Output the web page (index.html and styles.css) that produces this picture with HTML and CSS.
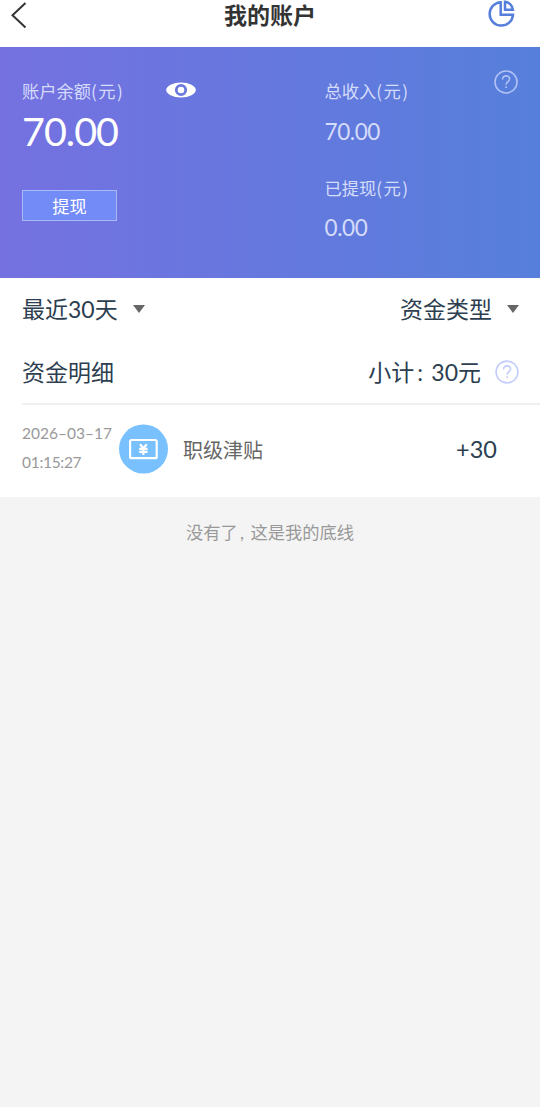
FILE: index.html
```html
<!DOCTYPE html>
<html lang="zh-CN">
<head>
<meta charset="utf-8">
<title>我的账户</title>
<link rel="stylesheet" href="styles.css">
</head>
<body>
<header class="navbar">
  <svg class="back" width="18" height="30" viewBox="0 0 18 30"><path d="M15.500 3 2.500 15.300 15.500 27.500" fill="none" stroke="#333" stroke-width="2"/></svg>
  <h1 class="title">我的账户</h1>
  <svg class="chart" width="28" height="28" viewBox="0 0 28 28" fill="none" stroke="#567fdc" stroke-width="2.500"><path d="M13.700 2.200A11.700 11.700 0 1 0 26 14.800H13.700Z"/><path d="M18 1.800V9.800H25.900A8.800 8.800 0 0 0 18 1.800Z"/></svg>
</header>
<section class="hero">
  <div class="balance">
    <div class="label-row"><span class="label">账户余额<span class="unit">(元)</span></span>
      <svg class="eye" width="30" height="16" viewBox="0 0 30 16"><ellipse cx="15" cy="8" rx="14.800" ry="7.400" fill="#fff"/><circle cx="15" cy="8" r="4.700" fill="none" stroke="#6b78de" stroke-width="2.800"/></svg>
    </div>
    <div class="amount">70.00</div>
    <button class="withdraw">提现</button>
  </div>
  <div class="stats">
    <div class="label">总收入<span class="unit">(元)</span></div>
    <div class="value">70.00</div>
    <div class="label">已提现<span class="unit">(元)</span></div>
    <div class="value">0.00</div>
  </div>
  <svg class="help" width="24" height="24" viewBox="0 0 24 24" fill="none" stroke="#b0c2f5" stroke-width="1.600"><circle cx="12" cy="12" r="11"/><path d="M8.600 9.400C8.600 4.700 15.600 4.700 15.600 9.100C15.600 11.600 12.100 11.700 12.100 14.700"/><path d="M12.100 16.300v1.800"/></svg>
</section>
<section class="panel">
  <div class="row filters">
    <span class="pick">最近30天 <i class="caret"></i></span>
    <span class="pick">资金类型 <i class="caret"></i></span>
  </div>
  <div class="row summary">
    <span>资金明细</span>
    <span class="pick total"><span>小计<span class="colon">:</span>30元</span>
      <svg width="24" height="24" viewBox="0 0 24 24" fill="none" stroke="#c3cdfb" stroke-width="1.600"><circle cx="12" cy="12" r="10.900"/><path d="M8.600 9.400C8.600 4.700 15.600 4.700 15.600 9.100C15.600 11.600 12.100 11.700 12.100 14.700"/><path d="M12.100 16.300v1.800"/></svg>
    </span>
  </div>
  <div class="record">
    <div class="time"><div>2026–03–17</div><div class="clock">01:15:27</div></div>
    <svg class="badge" width="50" height="50" viewBox="0 0 50 50"><circle cx="25.500" cy="25" r="24.500" fill="#79c1fe"/><rect x="12.100" y="16" width="26.600" height="18.200" rx="1.500" fill="none" stroke="#fff" stroke-width="2.200"/><path d="M22 20.300 25.400 24.300 28.800 20.300M25.400 24V31M21.200 24.800H29.600M21.200 27.900H29.600" fill="none" stroke="#fff" stroke-width="2.200"/></svg>
    <span class="name">职级津贴</span>
    <span class="delta">+30</span>
  </div>
</section>
<footer class="end">没有了<span class="comma">,</span>这是我的底线</footer>
</body>
</html>
```
FILE: styles.css
```css
* { box-sizing: border-box; }
body {
  margin: 0;
  min-height: 1107px;
  background: #f4f4f4;
  font-family: Lato, "Noto Sans CJK SC", sans-serif;
  color: #2c3e50;
}
svg { display: block; flex: none; }
.navbar {
  height: 47px;
  padding: 0 25px 0 10px;
  background: #fff;
  display: grid;
  grid-template-columns: 28px 1fr 28px;
  align-items: start;
}
.title {
  margin: 0;
  padding-left: 15px;
  text-align: center;
  font-size: 23px;
  line-height: 31px;
  font-weight: 700;
  color: #333;
}
.hero {
  height: 230.5px;
  padding: 22px 22px 0;
  background: linear-gradient(90deg, #7571e1, #567fdb);
  display: flex;
  color: #fff;
}
.balance { width: 302.5px; }
.stats { flex: 1; }
.label-row {
  display: flex;
  justify-content: space-between;
  align-items: center;
  padding-right: 129px;
}
.label {
  font-size: 17.25px;
  line-height: 44px;
  color: #d5dcfa;
  white-space: nowrap;
}
.label-row .label { height: 44px; }
.eye { margin-top: -2px; }
.unit { letter-spacing: 1.5px; font-family: "Noto Sans CJK SC", sans-serif; }
.amount {
  font-size: 39.5px;
  line-height: 40px;
  margin-top: -2px;
  letter-spacing: -1px;
}
.withdraw {
  display: block;
  width: 95px;
  height: 31px;
  margin: 39px 0 0;
  padding: 1px 0 0;
  border: 1px solid #a9baf8;
  background: #728bf6;
  color: #fff;
  font: 17.25px/29px Lato, "Noto Sans CJK SC", sans-serif;
}
.value {
  font-size: 22.5px;
  line-height: 35px;
  letter-spacing: -0.4px;
  color: #d5dcfa;
  margin-bottom: 17px;
}
.value:last-child { margin-top: -1px; }
.help { margin: 1px 0 0 -24px; }
.panel { background: #fff; height: 219px; }
.row {
  display: flex;
  justify-content: space-between;
  align-items: center;
  padding-right: 21px;
  margin-left: 22px;
  font-size: 23px;
  line-height: 30px;
}
.filters { height: 62.5px; }
.summary { height: 64.5px; padding-top: 2px; border-bottom: 2px solid #f0f0f0; }
.pick { display: flex; align-items: center; }
.caret {
  margin-left: 15px;
  border: 6.5px solid transparent;
  border-top: 8px solid #666;
  border-bottom: 0;
}
.total svg { margin-left: 14px; }
.colon { display: inline-block; width: 17px; padding-left: 3px; }
.record {
  display: flex;
  align-items: center;
  height: 89px;
  padding: 0 43px 0 22px;
}
.time {
  width: 96px;
  margin-top: -3px;
  font-size: 15.5px;
  line-height: 29px;
  color: #999;
}
.clock { letter-spacing: -0.3px; }
.name { margin-left: 15px; font-size: 20px; color: #666; }
.delta { margin-left: auto; font-size: 23.5px; }
.end {
  padding-top: 23.5px;
  text-align: center;
  font-size: 17.25px;
  line-height: 26px;
  color: #999;
}
.comma { display: inline-block; width: 12.5px; text-align: left; padding-left: 2px; }
```
